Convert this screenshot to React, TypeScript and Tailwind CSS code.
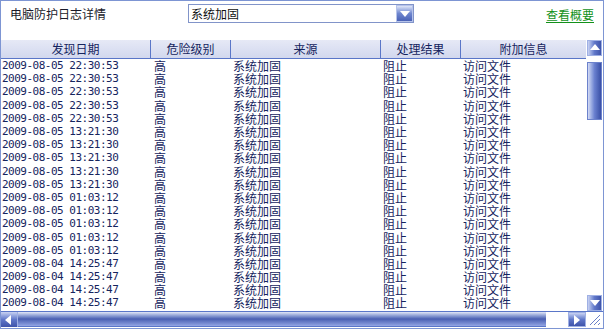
import React from "react";

const rowsData: [string, number][] = [
  ["2009-08-05 22:30:53", 5],
  ["2009-08-05 13:21:30", 5],
  ["2009-08-05 01:03:12", 5],
  ["2009-08-04 14:25:47", 5],
];

const rows: string[] = [];
rowsData.forEach(([d, n]) => {
  for (let i = 0; i < n; i++) rows.push(d);
});

const cjk = { fontFamily: '"Noto Sans CJK SC", "Noto Sans", sans-serif' };
const mono = { fontFamily: '"DejaVu Sans Mono", "Liberation Mono", monospace' };

function Tri({ dir }: { dir: "up" | "down" | "left" | "right" }) {
  const pts =
    dir === "up"
      ? "1,8 6,2 11,8"
      : dir === "down"
      ? "1,3 11,3 6,9"
      : dir === "left"
      ? "8,1 8,11 2,6"
      : "3,1 3,11 9,6";
  return (
    <svg width="12" height="12" viewBox="0 0 12 12">
      <polygon points={pts} fill="#ffffff" />
    </svg>
  );
}

export default function App() {
  return (
    <div className="w-[604px] h-[329px] border border-[#7d95d3] bg-white flex flex-col overflow-hidden" style={cjk}>
      {/* top bar */}
      <div className="h-[39px] flex items-start">
        <div className="w-[187px] pl-[9px] pt-[5px] text-[12px] leading-[16px] text-[#1a1a2a]">电脑防护日志详情</div>
        <div className="mt-[3px] w-[226px] h-[19px] border border-[#8194c9] flex items-center bg-white">
          <div className="flex-1 pl-[2px] text-[12px] leading-[16px] text-[#111]">系统加固</div>
          <div className="w-[17px] h-[17px] border border-[#b6c3ea] bg-gradient-to-b from-[#dfe5f7] via-[#6f86cf] to-[#4a62b6] flex items-center justify-center">
            <Tri dir="down" />
          </div>
        </div>
        <div className="flex-1" />
        <a className="mt-[6px] mr-[9px] text-[12px] leading-[15px] text-[#13911a] underline underline-offset-2 cursor-pointer">查看概要</a>
      </div>

      {/* middle */}
      <div className="h-[271px] flex">
        <div className="w-[585px] flex flex-col overflow-hidden">
          <div className="h-[19px] flex border-b border-[#5a76c8] bg-gradient-to-b from-[#e6e9f6] to-[#d2d8ee] text-[12px] leading-[18px] text-[#15245e] shrink-0">
            <div className="w-[150px] border-r border-[#5a76c8] text-center">发现日期</div>
            <div className="w-[80px] border-r border-[#5a76c8] text-center">危险级别</div>
            <div className="w-[150px] border-r border-[#5a76c8] text-center">来源</div>
            <div className="w-[80px] border-r border-[#5a76c8] text-center">处理结果</div>
            <div className="flex-1 text-center">附加信息</div>
          </div>
          <div className="flex-1 overflow-hidden text-[#15245e]">
            {rows.map((d, i) => (
              <div key={i} className="h-[13.2px] flex items-center">
                <div className="w-[150px] pl-[1px] text-[11px] tracking-[-0.5px] leading-[13px]" style={mono}>{d}</div>
                <div className="w-[80px] pl-[3px] text-[12px] leading-[13px]">高</div>
                <div className="w-[150px] pl-[2px] text-[12px] leading-[13px]">系统加固</div>
                <div className="w-[80px] pl-[2px] text-[12px] leading-[13px]">阻止</div>
                <div className="flex-1 pl-[2px] text-[12px] leading-[13px]">访问文件</div>
              </div>
            ))}
          </div>
        </div>
        {/* vertical scrollbar */}
        <div className="w-[17px] px-[1px] flex flex-col">
          <div className="h-[16px] border border-[#9fb0e4] bg-gradient-to-r from-[#c9d2f2] via-[#6077c9] to-[#3f54aa] flex items-center justify-center">
            <Tri dir="up" />
          </div>
          <div className="mt-[6px] h-[58px] border border-[#6c82cc] bg-gradient-to-r from-[#d4dbf4] via-[#6a80cf] to-[#3a4fa6]" />
          <div className="flex-1" />
          <div className="h-[16px] border border-[#9fb0e4] bg-gradient-to-r from-[#c9d2f2] via-[#6077c9] to-[#3f54aa] flex items-center justify-center">
            <Tri dir="down" />
          </div>
        </div>
      </div>

      {/* horizontal scrollbar */}
      <div className="h-[16px] flex items-stretch border-t border-[#5a76c8]">
        <div className="w-[17px] bg-gradient-to-b from-[#c9d2f2] via-[#6077c9] to-[#3f54aa] border-r border-[#9fb0e4] flex items-center justify-center">
          <Tri dir="left" />
        </div>
        <div className="w-[528px] bg-gradient-to-b from-[#e2e7f7] via-[#4a5fb2] to-[#93a5e4] border-b border-[#5a76c8]" />
        <div className="w-[22px]" />
        <div className="w-[18px] bg-gradient-to-b from-[#c9d2f2] via-[#6077c9] to-[#3f54aa] border border-[#9fb0e4] flex items-center justify-center">
          <Tri dir="right" />
        </div>
        <div className="flex-1 flex items-end justify-center pb-[1px]">
          <svg width="13" height="13" viewBox="0 0 13 13">
            <line x1="2" y1="12" x2="12" y2="2" stroke="#6a80c8" strokeWidth="1" />
            <line x1="6" y1="12" x2="12" y2="6" stroke="#6a80c8" strokeWidth="1" />
            <line x1="10" y1="12" x2="12" y2="10" stroke="#6a80c8" strokeWidth="1" />
          </svg>
        </div>
      </div>
      <div className="flex-1" />
    </div>
  );
}
